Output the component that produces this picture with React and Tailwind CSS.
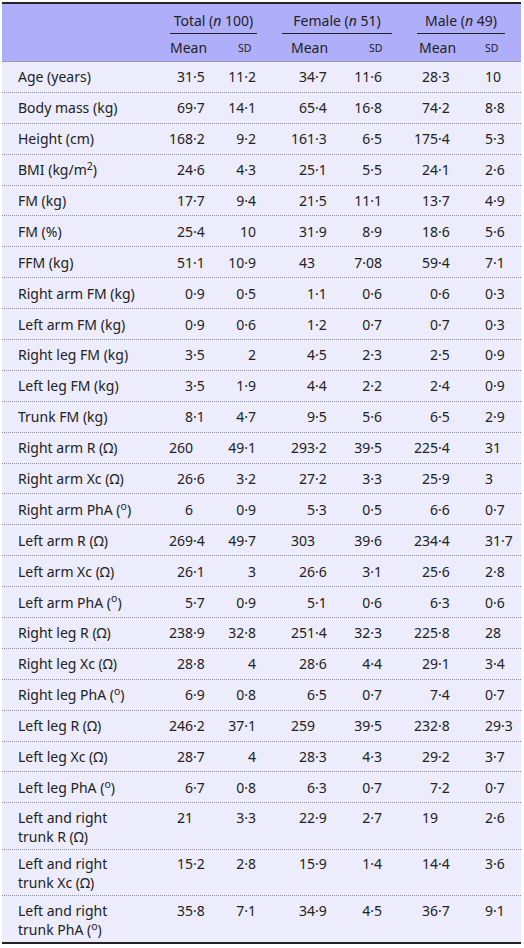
import React from 'react';

const Ohm = 'Ω';
const Deg = () => <sup>o</sup>;

const rows = [
  ['Age (years)', '31·5', '11·2', '34·7', '11·6', '28·3', '10'],
  ['Body mass (kg)', '69·7', '14·1', '65·4', '16·8', '74·2', '8·8'],
  ['Height (cm)', '168·2', '9·2', '161·3', '6·5', '175·4', '5·3'],
  [<>BMI (kg/m<sup>2</sup>)</>, '24·6', '4·3', '25·1', '5·5', '24·1', '2·6'],
  ['FM (kg)', '17·7', '9·4', '21·5', '11·1', '13·7', '4·9'],
  ['FM (%)', '25·4', '10', '31·9', '8·9', '18·6', '5·6'],
  ['FFM (kg)', '51·1', '10·9', '43', '7·08', '59·4', '7·1'],
  ['Right arm FM (kg)', '0·9', '0·5', '1·1', '0·6', '0·6', '0·3'],
  ['Left arm FM (kg)', '0·9', '0·6', '1·2', '0·7', '0·7', '0·3'],
  ['Right leg FM (kg)', '3·5', '2', '4·5', '2·3', '2·5', '0·9'],
  ['Left leg FM (kg)', '3·5', '1·9', '4·4', '2·2', '2·4', '0·9'],
  ['Trunk FM (kg)', '8·1', '4·7', '9·5', '5·6', '6·5', '2·9'],
  [`Right arm R (${Ohm})`, '260', '49·1', '293·2', '39·5', '225·4', '31'],
  [`Right arm Xc (${Ohm})`, '26·6', '3·2', '27·2', '3·3', '25·9', '3'],
  [<>Right arm PhA (<Deg />)</>, '6', '0·9', '5·3', '0·5', '6·6', '0·7'],
  [`Left arm R (${Ohm})`, '269·4', '49·7', '303', '39·6', '234·4', '31·7'],
  [`Left arm Xc (${Ohm})`, '26·1', '3', '26·6', '3·1', '25·6', '2·8'],
  [<>Left arm PhA (<Deg />)</>, '5·7', '0·9', '5·1', '0·6', '6·3', '0·6'],
  [`Right leg R (${Ohm})`, '238·9', '32·8', '251·4', '32·3', '225·8', '28'],
  [`Right leg Xc (${Ohm})`, '28·8', '4', '28·6', '4·4', '29·1', '3·4'],
  [<>Right leg PhA (<Deg />)</>, '6·9', '0·8', '6·5', '0·7', '7·4', '0·7'],
  [`Left leg R (${Ohm})`, '246·2', '37·1', '259', '39·5', '232·8', '29·3'],
  [`Left leg Xc (${Ohm})`, '28·7', '4', '28·3', '4·3', '29·2', '3·7'],
  [<>Left leg PhA (<Deg />)</>, '6·7', '0·8', '6·3', '0·7', '7·2', '0·7'],
  [<>Left and right<br />trunk R ({Ohm})</>, '21', '3·3', '22·9', '2·7', '19', '2·6', true],
  [<>Left and right<br />trunk Xc ({Ohm})</>, '15·2', '2·8', '15·9', '1·4', '14·4', '3·6', true],
  [<>Left and right<br />trunk PhA (<Deg />)</>, '35·8', '7·1', '34·9', '4·5', '36·7', '9·1', true],
];

const gridCols = 'grid grid-cols-[158px_65px_53px_72px_60px_68px_43px]';

// integer part right-aligned in a fixed box, so the decimal points line up
const Dec = ({ v, box }) => {
  const [int, frac] = v.split('·');
  return (
    <span className="flex">
      <span className={`${box} text-right`}>{int}</span>
      {frac !== undefined && <span>·{frac}</span>}
    </span>
  );
};

const GroupHead = ({ children, span, inset }) => (
  <div className={`${span} flex flex-col pt-[7px]`}>
    <div className={`${inset} text-center leading-[20px]`}>{children}</div>
    <div className={`${inset} mt-[2px] h-px bg-[#222]`} />
  </div>
);

const Row = ({ r, last }) => {
  const [label, tm, ts, fm, fs, mm, ms, tall] = r;
  const rowCls = tall
    ? 'items-start pt-[4.5px] pb-[3px]'
    : 'items-center h-[30.9px]';
  return (
    <div
      className={`${gridCols} ${rowCls} leading-[19px] ${
        last ? '' : 'border-b border-dotted border-[#8f8f9c]'
      }`}
    >
      <div className="pl-[16px]">{label}</div>
      <div><Dec v={tm} box="w-[33px]" /></div>
      <div className="text-right pr-[22px]">{ts}</div>
      <div><Dec v={fm} box="w-[37px]" /></div>
      <div className="text-right pr-[28px]">{fs}</div>
      <div><Dec v={mm} box="w-[28px]" /></div>
      <div className="pl-[7px]">{ms}</div>
    </div>
  );
};

export default function App() {
  return (
    <div className="min-h-screen bg-white pt-[2px] pl-[2px] font-['Noto_Sans',sans-serif] text-[14px] text-[#222]">
      <div className="w-[519px] border-t-2 border-b-2 border-[#222] bg-[#ececfd]">
        <div className="bg-[#afaefa] border-b border-[#9b9bb0]">
          <div className={`${gridCols} h-[30px]`}>
            <div />
            <GroupHead span="col-span-2" inset="ml-[10px] mr-[21px]">
              Total (<i>n</i> 100)
            </GroupHead>
            <GroupHead span="col-span-2" inset="ml-[4px] mr-[18px]">
              Female (<i>n</i> 51)
            </GroupHead>
            <GroupHead span="col-span-2" inset="ml-[7px] mr-[16px]">
              Male (<i>n</i> 49)
            </GroupHead>
          </div>
          <div className={`${gridCols} h-[27px] items-center leading-[20px]`}>
            <div />
            <div className="pl-[10px]">Mean</div>
            <div className="pl-[13px] text-[10.5px]">SD</div>
            <div className="pl-[13px]">Mean</div>
            <div className="pl-[19px] text-[10.5px]">SD</div>
            <div className="pl-[9px]">Mean</div>
            <div className="pl-[7px] text-[10.5px]">SD</div>
          </div>
        </div>
        {rows.map((r, i) => (
          <Row key={i} r={r} last={i === rows.length - 1} />
        ))}
      </div>
    </div>
  );
}
